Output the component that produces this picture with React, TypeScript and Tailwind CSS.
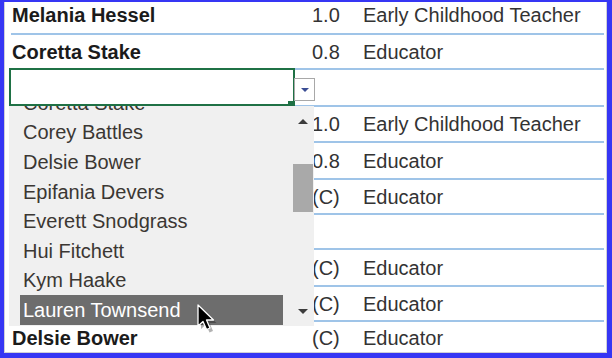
import React from "react";

const rows = [
  { name: "Melania Hessel", fte: "1.0", role: "Early Childhood Teacher", h: "h-[33px] pb-[5px]" },
  { name: "Coretta Stake", fte: "0.8", role: "Educator", h: "h-[35px]" },
  { name: "", fte: "", role: "", h: "h-[37px]" },
  { name: "", fte: "1.0", role: "Early Childhood Teacher", h: "h-[36px]" },
  { name: "", fte: "0.8", role: "Educator", h: "h-[37px]" },
  { name: "", fte: "(C)", role: "Educator", h: "h-[35px]" },
  { name: "", fte: "", role: "", h: "h-[35px]" },
  { name: "", fte: "(C)", role: "Educator", h: "h-[37px]" },
  { name: "", fte: "(C)", role: "Educator", h: "h-[35px]" },
  { name: "Delsie Bower", fte: "(C)", role: "Educator", h: "h-[31px]", last: true },
];

const names = [
  "Coretta Stake",
  "Corey Battles",
  "Delsie Bower",
  "Epifania Devers",
  "Everett Snodgrass",
  "Hui Fitchett",
  "Kym Haake",
  "Lauren Townsend",
];

function Caret({ up, color }: { up?: boolean; color: string }) {
  return (
    <svg width="10" height="5" viewBox="0 0 10 5">
      <path d={up ? "M0 5 L5 0 L10 5 Z" : "M0 0 L10 0 L5 5 Z"} fill={color} />
    </svg>
  );
}

export default function App() {
  return (
    <div
      className="w-[612px] h-[358px] bg-[#3636f4] pt-[2px] pl-[4px] pr-[5px] pb-[5px]"
      style={{ fontFamily: '"Liberation Sans", Arial, sans-serif' }}
    >
      <div className="relative h-full overflow-hidden bg-white border-l border-b border-r border-[#cfcfd8] text-[20px]">
        {/* sheet rows */}
        {rows.map((r, i) => (
          <div
            key={i}
            className={`ml-[6px] mr-[2px] flex items-center ${r.h} ${
              r.last ? "" : "border-b-2 border-[#9fc4e8]"
            }`}
          >
            <div className="w-[301px] pl-[1px] font-bold text-[#1b1b1b]">{r.name}</div>
            <div className="w-[51px] text-[#333]">{r.fte}</div>
            <div className="text-[#333]">{r.role}</div>
          </div>
        ))}

        {/* active cell */}
        <div className="absolute left-[4px] top-[66px] w-[286px] h-[38px] border-2 border-[#1f7145] bg-white" />
        <div className="absolute left-[283px] top-[99px] w-[7px] h-[6px] bg-[#1f7145]" />

        {/* dropdown button */}
        <div className="absolute left-[289px] top-[76px] w-[21px] h-[23px] border border-[#a8a8a8] bg-white flex items-center justify-center">
          <svg width="8" height="4" viewBox="0 0 8 4">
            <path d="M0 0 L8 0 L4 4 Z" fill="#3a4d94" />
          </svg>
        </div>

        {/* dropdown list */}
        <div className="absolute left-[4px] top-[104px] w-[305px] h-[220px] bg-[#f0f0f0] flex">
          <div className="w-[274px] pl-[11px] overflow-hidden">
            <div className="mt-[-18px]">
              {names.map((n) => {
                const sel = n === "Lauren Townsend";
                return (
                  <div
                    key={n}
                    className={`h-[29.6px] flex items-center pl-[3px] ${
                      sel ? "bg-[#6d6d6d] text-white" : "text-[#3b3733]"
                    }`}
                  >
                    {n}
                  </div>
                );
              })}
            </div>
          </div>
          <div className="ml-[8px] w-[23px] flex flex-col">
            <div className="h-[30px] flex items-center justify-center">
              <Caret up color="#3c3c3c" />
            </div>
            <div className="mt-[28px] ml-[2px] w-[20px] h-[48px] bg-[#a9a9a9]" />
            <div className="flex-1" />
            <div className="h-[30px] flex items-center justify-center">
              <Caret color="#3c3c3c" />
            </div>
          </div>
        </div>

        {/* mouse pointer */}
        <svg
          className="absolute left-[191px] top-[301px]"
          width="26"
          height="34"
          viewBox="0 0 26 34"
        >
          <path
            d="M2 2 L2 23 L7 18.5 L10.5 26.5 L14 25 L10.5 17 L17.5 17 Z"
            fill="rgba(0,0,0,0.3)"
            transform="translate(3,3)"
          />
          <path
            d="M2 2 L2 23 L7 18.5 L10.5 26.5 L14 25 L10.5 17 L17.5 17 Z"
            fill="#000"
            stroke="#fff"
            strokeWidth="1.3"
            strokeLinejoin="round"
          />
        </svg>
      </div>
    </div>
  );
}
